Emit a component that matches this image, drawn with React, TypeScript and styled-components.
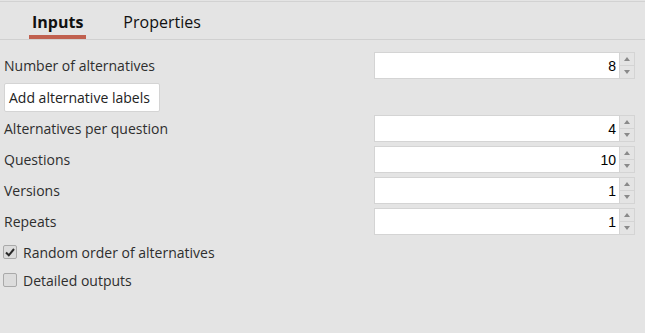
import React from "react";
import styled, { createGlobalStyle } from "styled-components";

const Global = createGlobalStyle`
  html, body { margin: 0; padding: 0; background: #e4e4e4; }
  body { font-family: "Open Sans", "Noto Sans", sans-serif; color: #333; }
`;

const Page = styled.div`
  width: 645px;
  height: 333px;
  box-sizing: border-box;
  border-top: 1px solid #d2d2d2;
  margin-top: 1px;
  background: #e4e4e4;
  display: flex;
  flex-direction: column;
`;

const TabBar = styled.div`
  display: flex;
  height: 37px;
  padding-left: 29px;
  gap: 37px;
  border-bottom: 1px solid #d0d0d0;
  align-items: stretch;
`;

const Tab = styled.div<{ $active?: boolean }>`
  position: relative;
  font-size: 16px;
  font-weight: ${(p) => (p.$active ? 700 : 400)};
  color: #111;
  padding: 0 ${(p) => (p.$active ? "3px" : "0")};
  display: flex;
  align-items: center;
  padding-top: 2px;
  box-sizing: border-box;
  &::after {
    content: "";
    display: ${(p) => (p.$active ? "block" : "none")};
    position: absolute;
    left: 0;
    right: 0;
    bottom: 0;
    height: 4px;
    background: #c0604f;
  }
`;

const Body = styled.div`
  display: flex;
  flex-direction: column;
  padding: 12px 10px 0 4px;
`;

const Row = styled.div<{ $mt?: number }>`
  display: flex;
  align-items: center;
  justify-content: space-between;
  height: 27px;
  margin-top: ${(p) => p.$mt ?? 0}px;
`;

const Label = styled.span`
  font-size: 14px;
  color: #2e2e2e;
`;

const Spin = styled.div`
  display: flex;
  width: 261px;
  height: 27px;
  box-sizing: border-box;
`;

const Field = styled.div`
  flex: 1;
  background: #fff;
  border: 1px solid #d4d4d4;
  border-right: none;
  display: flex;
  align-items: center;
  justify-content: flex-end;
  padding-right: 3px;
  font-family: "Liberation Sans", Arial, sans-serif;
  font-size: 14px;
  color: #000;
`;

const Arrows = styled.div`
  width: 16px;
  display: flex;
  flex-direction: column;
  border: 1px solid #d4d4d4;
  box-sizing: border-box;
`;

const Arrow = styled.div<{ $down?: boolean }>`
  flex: 1;
  display: flex;
  align-items: center;
  justify-content: center;
  border-top: ${(p) => (p.$down ? "1px solid #d4d4d4" : "none")};
  &::before {
    content: "";
    width: 0;
    height: 0;
    border-left: 3.5px solid transparent;
    border-right: 3.5px solid transparent;
    ${(p) => (p.$down ? "border-top: 4px solid #8a8a8a;" : "border-bottom: 4px solid #8a8a8a;")}
  }
`;

const Button = styled.button`
  align-self: flex-start;
  margin-top: 4px;
  height: 29px;
  width: 156px;
  background: #fff;
  border: 1px solid #d4d4d4;
  border-radius: 2px;
  font-family: "Open Sans", "Noto Sans", sans-serif;
  font-size: 14px;
  color: #222;
  padding: 0 4px;
  text-align: left;
`;

const Check = styled.label<{ $mt?: number }>`
  display: flex;
  align-items: center;
  gap: 6px;
  margin-top: ${(p) => p.$mt ?? 0}px;
  height: 20px;
  font-size: 14px;
  color: #2e2e2e;
  margin-left: -1px;
`;

const Box = styled.span`
  width: 12px;
  height: 12px;
  border: 1px solid #a9a9a9;
  border-radius: 2px;
  background: #dcdcdc;
  display: flex;
  align-items: center;
  justify-content: center;
`;

function Spinner({ value }: { value: number }) {
  return (
    <Spin>
      <Field>{value}</Field>
      <Arrows>
        <Arrow />
        <Arrow $down />
      </Arrows>
    </Spin>
  );
}

export default function App() {
  return (
    <>
      <Global />
      <Page>
        <TabBar>
          <Tab $active>Inputs</Tab>
          <Tab>Properties</Tab>
        </TabBar>
        <Body>
          <Row>
            <Label>Number of alternatives</Label>
            <Spinner value={8} />
          </Row>
          <Button>Add alternative labels</Button>
          <Row $mt={3}>
            <Label>Alternatives per question</Label>
            <Spinner value={4} />
          </Row>
          <Row $mt={4}>
            <Label>Questions</Label>
            <Spinner value={10} />
          </Row>
          <Row $mt={4}>
            <Label>Versions</Label>
            <Spinner value={1} />
          </Row>
          <Row $mt={4}>
            <Label>Repeats</Label>
            <Spinner value={1} />
          </Row>
          <Check $mt={7}>
            <Box>
              <svg width="10" height="9" viewBox="0 0 10 9">
                <path d="M1 4.5 L3.8 7.3 L9 1" fill="none" stroke="#2a2a2a" strokeWidth="2" />
              </svg>
            </Box>
            Random order of alternatives
          </Check>
          <Check $mt={8}>
            <Box />
            Detailed outputs
          </Check>
        </Body>
      </Page>
    </>
  );
}
